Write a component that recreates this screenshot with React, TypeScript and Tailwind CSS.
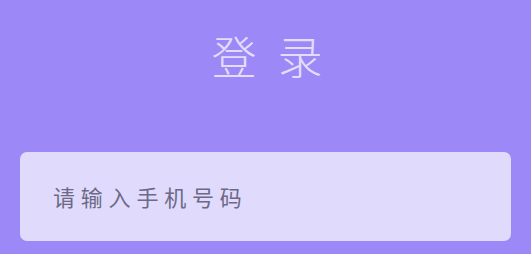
export default function App() {
  return (
    <div
      className="w-[531px] h-[254px] bg-[#9c88f6] flex flex-col overflow-hidden"
      style={{ fontFamily: '"Noto Sans CJK SC", "Noto Sans", sans-serif' }}
    >
      <div className="h-[152px] flex justify-center pl-[3px] pt-[26px]">
        <div className="flex gap-[21px] text-[45px] leading-[60px] font-light text-[#e2ddfc]">
          <span>登</span>
          <span>录</span>
        </div>
      </div>
      <div className="mx-[20px] h-[89px] rounded-[7px] bg-[#e0dbfc] flex items-center pl-[33px]">
        <span className="text-[22px] tracking-[5.8px] text-[#6d6986]">请输入手机号码</span>
      </div>
    </div>
  );
}
